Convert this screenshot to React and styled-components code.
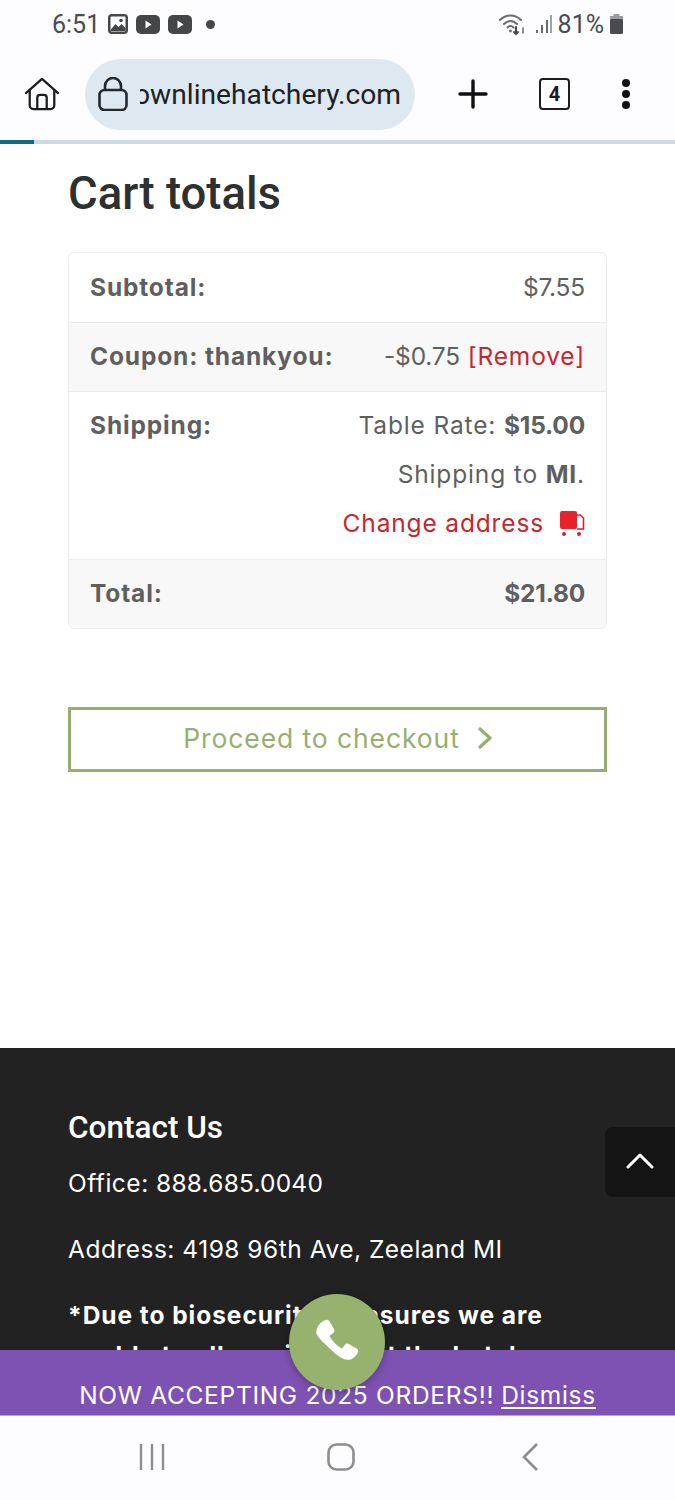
import React from "react";
import styled, { createGlobalStyle } from "styled-components";

const Global = createGlobalStyle`
  html, body { margin: 0; padding: 0; background: #fff; }
  * { box-sizing: border-box; }
`;
const body = `"Inter", "Liberation Sans", sans-serif`;
const Screen = styled.div`
  position: relative; width: 675px; height: 1500px; overflow: hidden;
  display: flex; flex-direction: column; background: #fff; font-family: ${body};
`;
const StatusBar = styled.div`
  height: 48px; background: #fdfcff; display: flex; align-items: center;
  justify-content: space-between; padding: 0 52px; color: #4a4b50;
  font-family: "Roboto", sans-serif; font-size: 25px; font-weight: 400;
`;
const StatusGroup = styled.div`display: flex; align-items: center; gap: ${p => p.$gap || 4}px;`;
const Dot = styled.span`width: 9px; height: 9px; border-radius: 50%; background: #45464a; margin-left: 6px;`;
const WifiSlot = styled.span`display: flex; margin-right: 3px;`;
const BrowserBar = styled.div`
  height: 92px; background: #fdfcff; display: flex; align-items: center; padding: 0 0 0 24px;
`;
const UrlPill = styled.div`
  width: 330px; height: 71px; margin-left: 25px; border-radius: 36px; background: #dde8f0;
  display: flex; align-items: center; padding: 0 14px 0 13px; gap: 12px;
`;
const UrlClip = styled.div`
  flex: 1; overflow: hidden; white-space: nowrap; direction: rtl; color: #1c2126;
  font-family: "Roboto", sans-serif; font-size: 28.2px; text-align: right;
`;
const ActionGroup = styled.div`display: flex; align-items: center; margin-left: 43px; gap: 51px;`;
const TabCount = styled.div`
  width: 31px; height: 32px; border: 2.5px solid #1b1d20; border-radius: 4px; display: flex;
  align-items: center; justify-content: center; font: 700 20px "Roboto", sans-serif; color: #1b1d20;
`;
const Progress = styled.div`height: 4px; background: #c9dbe4; flex: none;`;
const ProgressFill = styled.div`height: 100%; width: 34px; background: #0f6c80;`;
const Main = styled.main`flex: 1; min-height: 0; overflow: hidden; display: flex; flex-direction: column;`;
const Cart = styled.section`height: 904px; flex: none; padding: 22px 68px 0;`;
const Title = styled.h2`
  margin: 0; font: 500 45.5px/56px "Roboto", sans-serif; color: #2f3030;
`;
const Table = styled.div`
  margin-top: 30px; border: 1px solid #ececec; border-radius: 6px; overflow: hidden; color: #5f5f5f;
  font-size: 24.5px; letter-spacing: .85px;
`;
const Row = styled.div`
  display: flex; justify-content: space-between; align-items: ${p => p.$top ? "flex-start" : "center"};
  height: ${p => p.$h}px; padding: ${p => p.$top ? "18px 21px 0" : "0 21px 2px"};
  background: ${p => p.$alt ? "#f8f8f8" : "#fff"};
  & + & { border-top: 1px solid #ececec; }
`;
const Label = styled.span`font-weight: 700;`;
const Value = styled.span`font-weight: 400;`;
const Money = styled.span`letter-spacing: -.2px; font-weight: ${p => p.$bold ? 700 : "inherit"};`;
const RedLink = styled.span`color: #c9252d;`;
const ShipCol = styled.div`display: flex; flex-direction: column; align-items: flex-end; gap: 19px; line-height: 30px;`;
const Change = styled.div`display: flex; align-items: center; gap: 15px; color: #c9252d;`;
const Checkout = styled.a`
  margin-top: 78px; height: 65px; border: 3px solid #97ae70; display: flex; align-items: center;
  justify-content: center; gap: 18px; color: #97ae70; font-size: 26.5px; letter-spacing: .9px;
  padding-bottom: 3px;
`;
const Footer = styled.footer`
  flex: 1; background: #222222; color: #fff; padding: 62px 68px 0;
`;
const FooterTitle = styled.h3`margin: 0 0 17px; font: 500 31.5px/36px "Roboto", sans-serif;`;
const FooterText = styled.p`
  margin: 0 0 26px; font-size: 24.5px; line-height: 40px;
  font-weight: ${p => p.$bold ? 700 : 400}; letter-spacing: ${p => p.$bold ? ".95px" : ".5px"};
`;
const Digits = styled.span`letter-spacing: .2px;`;
const Banner = styled.div`
  height: 66px; flex: none; background: #7e52b3; color: #fff; display: flex; align-items: flex-end;
  justify-content: center; gap: 7px; padding-bottom: 5px; font-size: 24.5px; letter-spacing: .7px;
  border-bottom: 1px solid #b9a0d8;
`;
const Dismiss = styled.a`text-decoration: underline; text-underline-offset: 3px;`;
const NavBar = styled.div`
  height: 84px; flex: none; background: #fdfcff; display: grid; grid-template-columns: 188px 194px 18px;
  align-items: start; padding: 27px 0 0 139px;
`;
const ToTop = styled.button`
  position: absolute; right: 0; top: 1127px; width: 70px; height: 70px; border: 0; padding: 0 0 2px;
  background: #141414; border-radius: 8px 0 0 8px; display: flex; align-items: center; justify-content: center;
`;
const CallButton = styled.button`
  position: absolute; left: 289px; top: 1294px; width: 96px; height: 96px; border: 0; border-radius: 50%;
  background: #97b26f; box-shadow: 0 2px 8px rgba(0,0,0,.3); display: flex; align-items: center; justify-content: center; padding: 0;
`;

const HomeIcon = () => (
  <svg width="36" height="34" viewBox="0 0 38 36" fill="none" stroke="#1b1d20" strokeWidth="2.4" strokeLinejoin="round" strokeLinecap="round">
    <path d="M2 17 19 2l17 15" /><path d="M6 14v16a4 4 0 0 0 4 4h18a4 4 0 0 0 4-4V14" /><path d="M14 34V22a3 3 0 0 1 3-3h4a3 3 0 0 1 3 3v12" />
  </svg>
);
const LockIcon = () => (
  <svg width="30" height="34" viewBox="0 0 30 34" fill="none" stroke="#25292d" strokeWidth="2.6" style={{flex:"none"}}>
    <rect x="1.5" y="13" width="27" height="20" rx="5" /><path d="M7 13V9a8 8 0 0 1 16 0v4" />
  </svg>
);
const PlusIcon = () => (
  <svg width="30" height="30" viewBox="0 0 30 30" stroke="#111" strokeWidth="3.4" strokeLinecap="round"><path d="M15 2v26M2 15h26" /></svg>
);
const MoreIcon = () => (
  <svg width="10" height="30" viewBox="0 0 10 30" fill="#111"><circle cx="5" cy="4" r="4" /><circle cx="5" cy="15" r="4" /><circle cx="5" cy="26" r="4" /></svg>
);
const PlayBadge = () => (
  <svg width="24" height="19" viewBox="0 0 24 19"><rect width="24" height="19" rx="5" fill="#45464a" /><path d="M9.500 5.500v8l6-4z" fill="#fff" /></svg>
);
const PictureBadge = () => (
  <svg width="20" height="20" viewBox="0 0 20 20"><rect width="20" height="20" rx="4" fill="#45464a" /><rect x="2.500" y="2.500" width="15" height="15" rx="1" fill="#fff" /><path d="M2.500 16l5-6 3 3 3-3 4 4v3h-15z" fill="#45464a" /><circle cx="13" cy="6.500" r="1.800" fill="#45464a" /></svg>
);
const WifiIcon = () => (
  <svg width="28" height="24" viewBox="0 0 28 24" fill="none" stroke="#6a6b6f" strokeWidth="2" strokeLinecap="round">
    <path d="M1 8c6-6 15-6 21 0" /><path d="M5 12c4-4 9-4 13 0" /><path d="M8.500 15.500c2-2 4-2 6 0" />
    <circle cx="11.500" cy="19" r="1.400" fill="#6a6b6f" stroke="none" /><path d="M17 15v7M15 20l2 2 2-2" stroke="#45464a" /><path d="M24 21v-5" strokeWidth="1.500" />
  </svg>
);
const SignalIcon = () => (
  <svg width="16" height="20" viewBox="0 0 16 20" stroke="#6a6b6f" strokeWidth="2"><path d="M1 19v-3M6 19v-8M11 19V6" /><path d="M15 19V1" stroke="#a0a1a5" /></svg>
);
const BatteryIcon = () => (
  <svg width="13" height="20" viewBox="0 0 13 20"><rect x="3.500" y="0" width="6" height="3" fill="#9c9da0" /><rect x="0" y="2" width="13" height="4" fill="#9c9da0" /><rect x="0" y="5" width="13" height="15" rx="1.500" fill="#4a4b50" /></svg>
);
const TruckIcon = () => (
  <svg width="26" height="27" viewBox="0 0 26 27">
    <rect x="1" y="1" width="17" height="18" rx="2" fill="#e7222b" />
    <path d="M18 5h3l3.500 3v11H18" fill="#fff" stroke="#c9252d" strokeWidth="1.600" />
    <circle cx="5" cy="24" r="2" fill="#c9252d" /><circle cx="20" cy="24" r="2" fill="#c9252d" />
  </svg>
);
const Chevron = () => (
  <svg width="14" height="22" viewBox="0 0 14 22" fill="none" stroke="#97ae70" strokeWidth="3.200" strokeLinecap="round" strokeLinejoin="round"><path d="M2 2l10 9-10 9" /></svg>
);
const UpIcon = () => (
  <svg width="28" height="18" viewBox="0 0 28 18" fill="none" stroke="#fff" strokeWidth="3" strokeLinecap="round" strokeLinejoin="round"><path d="M2 15 14 3l12 12" /></svg>
);
const PhoneIcon = () => (
  <svg width="46" height="46" viewBox="0 0 46 46" fill="#fff" stroke="#fff" strokeWidth="1.500" strokeLinejoin="round">
    <path d="M11 2c1.500-1 3-.7 3.800.6l4.400 7.500c.7 1.200.4 2.600-.7 3.500l-3 2.300c-.7.500-.8 1.300-.4 2 3 5.400 6.600 9 11.900 12 .7.400 1.500.3 2-.4l2.300-3c.9-1.100 2.300-1.400 3.500-.7l7.500 4.400c1.300.8 1.600 2.300.6 3.800-2.300 3.300-5 5.500-8 6-4 .6-10-2.500-17-9.500S2.300 17 2.900 13c.5-3 2.800-8.700 8.100-11z" />
  </svg>
);
const RecentsIcon = () => (
  <svg width="26" height="28" viewBox="0 0 26 28" stroke="#8c8d91" strokeWidth="2.400"><path d="M2 1v26M13 1v26M24 1v26" /></svg>
);
const HomeNavIcon = () => (
  <svg width="28" height="28" viewBox="0 0 28 28" fill="none" stroke="#8c8d91" strokeWidth="2.600"><rect x="1.500" y="1.500" width="25" height="25" rx="8" /></svg>
);
const BackIcon = () => (
  <svg width="18" height="28" viewBox="0 0 18 28" fill="none" stroke="#8c8d91" strokeWidth="2.600"><path d="M16 1 3 14l13 13" /></svg>
);

export default function App() {
  return (
    <Screen>
      <Global />
      <StatusBar>
        <StatusGroup $gap={8}>
          <span>6:51</span><PictureBadge /><PlayBadge /><PlayBadge /><Dot />
        </StatusGroup>
        <StatusGroup $gap={6}>
          <WifiSlot><WifiIcon /></WifiSlot><SignalIcon /><span>81%</span><BatteryIcon />
        </StatusGroup>
      </StatusBar>
      <BrowserBar>
        <HomeIcon />
        <UrlPill><LockIcon /><UrlClip><bdi>cackleownlinehatchery.com</bdi></UrlClip></UrlPill>
        <ActionGroup><PlusIcon /><TabCount>4</TabCount><MoreIcon /></ActionGroup>
      </BrowserBar>
      <Progress><ProgressFill /></Progress>
      <Main>
        <Cart>
          <Title>Cart totals</Title>
          <Table>
            <Row $h={69}><Label>Subtotal:</Label><Money>$7.55</Money></Row>
            <Row $h={69} $alt><Label>Coupon: thankyou:</Label><Value><Money>-$0.75</Money> <RedLink>[Remove]</RedLink></Value></Row>
            <Row $h={168} $top>
              <Label>Shipping:</Label>
              <ShipCol>
                <Value>Table Rate: <Money $bold>$15.00</Money></Value>
                <Value>Shipping to <b>MI</b>.</Value>
                <Change>Change address <TruckIcon /></Change>
              </ShipCol>
            </Row>
            <Row $h={69} $alt><Label>Total:</Label><Money $bold>$21.80</Money></Row>
          </Table>
          <Checkout>Proceed to checkout <Chevron /></Checkout>
        </Cart>
        <Footer>
          <FooterTitle>Contact Us</FooterTitle>
          <FooterText>Office: <Digits>888.685.0040</Digits></FooterText>
          <FooterText>Address: 4198 96th Ave, Zeeland MI</FooterText>
          <FooterText $bold>*Due to biosecurity measures we are unable to allow visitors at the hatchery</FooterText>
        </Footer>
      </Main>
      <Banner><span>NOW ACCEPTING 2025 ORDERS!!</span><Dismiss>Dismiss</Dismiss></Banner>
      <NavBar><RecentsIcon /><HomeNavIcon /><BackIcon /></NavBar>
      <ToTop aria-label="Back to top"><UpIcon /></ToTop>
      <CallButton aria-label="Call"><PhoneIcon /></CallButton>
    </Screen>
  );
}
